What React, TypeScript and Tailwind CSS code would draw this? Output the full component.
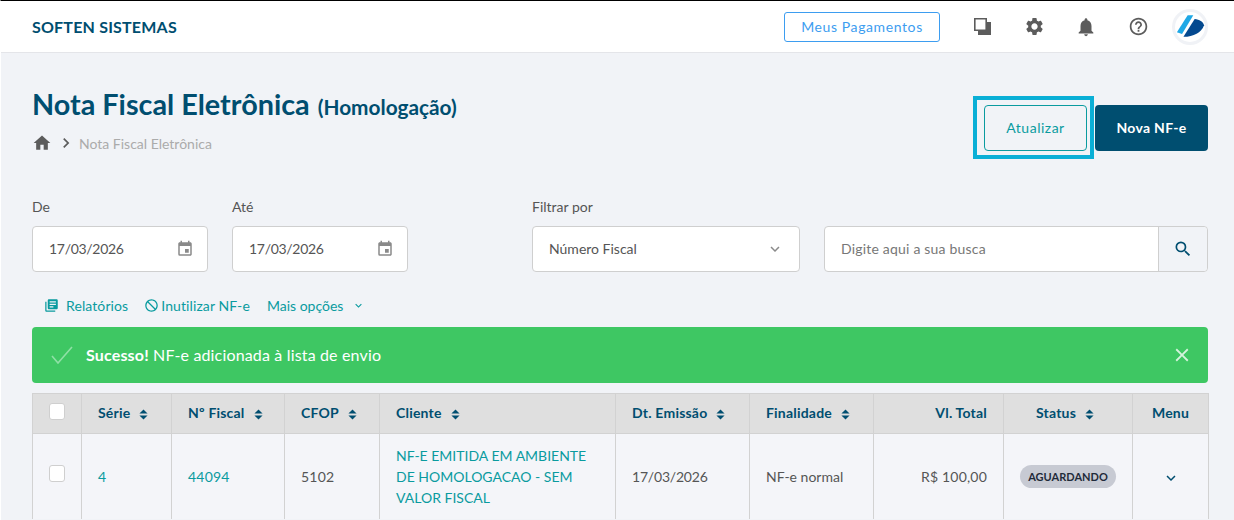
import { MdSettings, MdNotifications, MdHelpOutline, MdHome, MdChevronRight, MdEvent, MdLibraryBooks, MdBlock, MdExpandMore, MdSearch, MdClose } from 'react-icons/md';

function SortIcon() {
  return (
    <svg viewBox="0 0 10 12" className="w-[9px] h-[11px] inline-block ml-[9px] fill-[#004e70]">
      <path d="M5 0.5 9.5 5H0.5z" />
      <path d="M5 11.5 0.5 7h9z" />
    </svg>
  );
}

function WindowsIcon() {
  return (
    <svg viewBox="0 0 17 17" className="w-[17px] h-[17px]">
      <path d="M4 4h13v13H4z" fill="#5c5c5c" />
      <path d="M0.8 0.8h11.4v11.4H0.8z" fill="#fff" stroke="#5c5c5c" strokeWidth="1.6" />
    </svg>
  );
}

function Logo() {
  return (
    <div className="w-9 h-9 rounded-full border-[3px] border-[#f0f2f6] bg-white flex items-center justify-center">
      <svg viewBox="0 0 32 32" className="w-[30px] h-[30px]">
        <path d="M13.5 3.5h6L7.5 23.5 2 21.5z" fill="#1fa8e6" />
        <path d="M21 7.5c5 .5 9 3 10 6.5-3 8-11 12-22 12.5z" fill="#04498f" />
      </svg>
    </div>
  );
}

function DateField({ label, className }: { label: string; className: string }) {
  return (
    <div className={className}>
      <div className="text-sm leading-[21px] text-[#555] mb-[9px]">{label}</div>
      <div className="h-[46px] bg-white border border-[#cfcfcf] rounded flex items-center justify-between pl-4 pr-[13px] text-sm text-[#555]">
        <span className="tracking-[-0.3px]">17/03/2026</span>
        <MdEvent className="text-[#8a8a8a] text-[18px]" />
      </div>
    </div>
  );
}

const th = 'border border-[#d2d2d2] px-4 pb-[2px] h-10 text-[14px] font-bold text-[#004e70] tracking-[0.2px]';
const td = 'border border-[#d2d2d2] border-b-0 px-4 py-[11px] text-sm leading-[21px]';
const plain = 'text-[#555]';
const linkColor = 'text-[#0a9b9f]';

export default function App() {
  return (
    <div className="w-[1234px] h-[520px] overflow-hidden bg-[#f1f3f7] font-['Lato',sans-serif] border-t border-black border-l-white border-l">
      <header className="h-[52px] bg-white border-b border-[#e4e5e9] flex items-center pl-[31px] pr-[26px]">
        <div className="font-bold text-[16px] text-[#004e70] tracking-[0.2px]">SOFTEN SISTEMAS</div>
        <div className="ml-auto w-[156px] h-[30px] border border-[#3d9df0] rounded-[3px] flex items-center justify-center text-sm text-[#3d9df0] tracking-[0.6px]">
          Meus Pagamentos
        </div>
        <div className="ml-[31px] flex items-center gap-[30px] mr-[23px]">
          <div className="w-[22px] flex justify-center"><WindowsIcon /></div>
          <div className="w-[22px] flex justify-center"><MdSettings className="text-[21px] text-[#5c5c5c]" /></div>
          <div className="w-[22px] flex justify-center"><MdNotifications className="text-[22px] text-[#5c5c5c]" /></div>
          <div className="w-[22px] flex justify-center"><MdHelpOutline className="text-[21px] text-[#5c5c5c]" /></div>
        </div>
        <Logo />
      </header>

      <main className="pl-[31px] pr-[26px]">
        <div className="flex justify-between h-[107px] pt-[34px]">
          <div>
            <div className="text-[#004e70] font-bold text-[28.8px] leading-[34px]">
              Nota Fiscal Eletrônica <span className="text-[20.8px] ml-[1px]">(Homologação)</span>
            </div>
            <div className="flex items-center mt-[9px] text-[14px] text-[#ababab] h-5">
              <MdHome className="text-[20px] text-[#5c5c5c] mr-[4px]" />
              <MdChevronRight className="text-[20px] text-[#5c5c5c] mr-[3px]" />
              Nota Fiscal Eletrônica
            </div>
          </div>
          <div className="flex items-start pt-[9px]">
            <div className="border-[4px] border-[#0aafd6] pl-[7px] pr-[3px] pt-[5px] pb-[4px]">
              <div className="w-[103px] h-[46px] border border-[#0a9b9f] rounded flex items-center justify-center text-sm text-[#0a9b9f] tracking-[0.5px]">
                Atualizar
              </div>
            </div>
            <div className="ml-[1px] mt-[9px] w-[113px] h-[46px] bg-[#004e70] rounded flex items-center justify-center text-sm font-bold text-white tracking-[0.3px]">
              Nova NF-e
            </div>
          </div>
        </div>

        <div className="flex mt-[36px]">
          <DateField label="De" className="w-[176px] mr-[24px]" />
          <DateField label="Até" className="w-[176px] mr-[124px]" />
          <div className="w-[268px] mr-[24px]">
            <div className="text-sm leading-[21px] text-[#555] mb-[9px]">Filtrar por</div>
            <div className="h-[46px] bg-white border border-[#cfcfcf] rounded flex items-center justify-between pl-4 pr-[15px] text-sm text-[#555]">
              <span>Número Fiscal</span>
              <MdExpandMore className="text-[#8a8a8a] text-[18px]" />
            </div>
          </div>
          <div className="w-[384px] pt-[30px]">
            <div className="h-[46px] bg-white border border-[#cfcfcf] rounded flex items-center text-sm text-[#777]">
              <span className="pl-4 flex-1 tracking-[0.2px]">Digite aqui a sua busca</span>
              <div className="w-[49px] h-full border-l border-[#cfcfcf] bg-[#f1f3f7] rounded-r flex items-center justify-center">
                <MdSearch className="text-[20px] text-[#004e70]" />
              </div>
            </div>
          </div>
        </div>

        <div className={`flex items-center h-[21px] mt-[23px] pl-[12px] text-sm ${linkColor}`}>
          <MdLibraryBooks className="text-[15px] mr-[7px]" />
          <span className="tracking-[0.1px]">Relatórios</span>
          <MdBlock className="text-[15px] ml-[16px] mr-[2px] -scale-x-100" />
          <span className="tracking-[0.1px]">Inutilizar NF-e</span>
          <span className="ml-[17px]">Mais opções</span>
          <MdExpandMore className="text-[13px] ml-[9px]" />
        </div>

        <div className="mt-[11px] h-14 bg-[#3ec763] rounded flex items-center pl-[19px] pr-[15px] text-white text-[16px] tracking-[0.16px]">
          <svg viewBox="0 0 22 18" className="w-[22px] h-[18px] mr-[13px] fill-none stroke-[#8fe0a6] stroke-[1.6]">
            <path d="M1 10l6 7L21 1" />
          </svg>
          <b>Sucesso!</b>&nbsp;NF-e adicionada à lista de envio
          <MdClose className="ml-auto text-[22px] text-[#d5f3dd]" />
        </div>

        <table className="mt-[10px] w-[1176px] table-fixed border-collapse">
          <colgroup>
            <col className="w-[49px]" />
            <col className="w-[90px]" />
            <col className="w-[113px]" />
            <col className="w-[95px]" />
            <col className="w-[236px]" />
            <col className="w-[134px]" />
            <col className="w-[124px]" />
            <col className="w-[130px]" />
            <col className="w-[129px]" />
            <col className="w-[76px]" />
          </colgroup>
          <thead className="bg-[#dfdfdf]">
            <tr>
              <th className={`${th} text-left`}>
                <div className="w-4 h-[17px] bg-white border border-[#cfcfcf] rounded-[3px] -mt-[2px]" />
              </th>
              <th className={`${th} text-left`}>Série<SortIcon /></th>
              <th className={`${th} text-left`}>Nº Fiscal<SortIcon /></th>
              <th className={`${th} text-left`}>CFOP<SortIcon /></th>
              <th className={`${th} text-left`}>Cliente<SortIcon /></th>
              <th className={`${th} text-left`}>Dt. Emissão<SortIcon /></th>
              <th className={`${th} text-left`}>Finalidade<SortIcon /></th>
              <th className={`${th} text-right`}>Vl. Total</th>
              <th className={`${th} text-center pr-[22px]`}>Status<SortIcon /></th>
              <th className={`${th} text-center`}>Menu</th>
            </tr>
          </thead>
          <tbody className="bg-[#f4f5f9]">
            <tr>
              <td className={td}>
                <div className="w-4 h-[17px] bg-white border border-[#cfcfcf] rounded-[3px] -mt-[7px]" />
              </td>
              <td className={`${td} ${linkColor}`}>4</td>
              <td className={`${td} ${linkColor} tracking-[0.2px]`}>44094</td>
              <td className={`${td} ${plain} tracking-[0.2px]`}>5102</td>
              <td className={`${td} ${linkColor}`}>NF-E EMITIDA EM AMBIENTE DE HOMOLOGACAO - SEM VALOR FISCAL</td>
              <td className={`${td} ${plain} tracking-[-0.2px]`}>17/03/2026</td>
              <td className={`${td} ${plain}`}>NF-e normal</td>
              <td className={`${td} ${plain} text-right tracking-[0.2px]`}>R$ 100,00</td>
              <td className={`${td} text-center`}>
                <span className="inline-block w-24 h-[23px] leading-[23px] rounded-full bg-[#c7cad3] text-[11px] font-bold text-[#1f2a3a]">AGUARDANDO</span>
              </td>
              <td className={`${td} text-center`}>
                <MdExpandMore className="inline-block text-[18px] text-[#004e70]" />
              </td>
            </tr>
          </tbody>
        </table>
      </main>
    </div>
  );
}
